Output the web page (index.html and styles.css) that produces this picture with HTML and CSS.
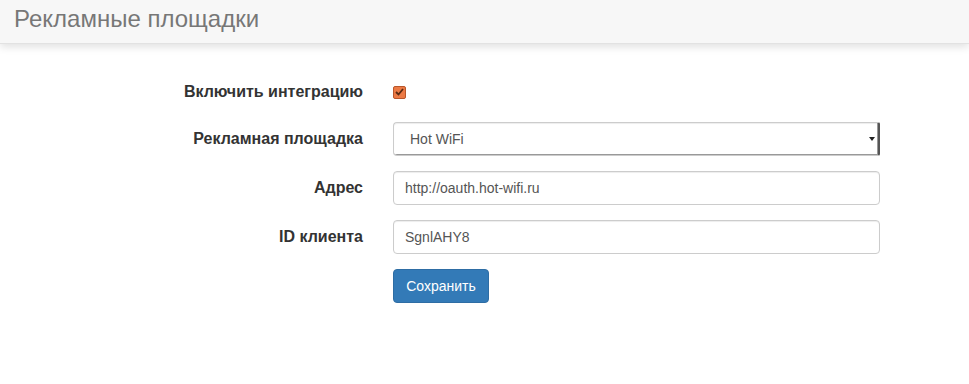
FILE: index.html
```html
<!DOCTYPE html>
<html lang="ru">
<head>
    <meta charset="UTF-8">
    <title>Рекламные площадки</title>
    <link rel="stylesheet" href="styles.css">
</head>
<body>

<div class="page-header">
    <h1>Рекламные площадки</h1>
</div>

<form class="form-horizontal">
    <div class="form-group">
        <label class="control-label">Включить интеграцию</label>
        <div class="field">
            <span class="check">
                <svg width="9" height="8" viewBox="0 0 9 8"><path d="M1 4 L3.5 6.5 L8 1" fill="none" stroke="#5a2a12" stroke-width="1.8"/></svg>
            </span>
        </div>
    </div>
    <div class="form-group">
        <label class="control-label">Рекламная площадка</label>
        <div class="field">
            <div class="select">
                <span>Hot WiFi</span>
                <span class="select-arrow"></span>
            </div>
        </div>
    </div>
    <div class="form-group">
        <label class="control-label">Адрес</label>
        <div class="field">
            <input type="text" class="form-control" value="http://oauth.hot-wifi.ru">
        </div>
    </div>
    <div class="form-group">
        <label class="control-label">ID клиента</label>
        <div class="field">
            <input type="text" class="form-control" value="SgnlAHY8">
        </div>
    </div>
    <div class="form-group">
        <div></div>
        <div class="field">
            <button type="button" class="btn">Сохранить</button>
        </div>
    </div>
</form>

</body>
</html>
```

FILE: styles.css
```css
body {
    font-family: "Liberation Sans", Arial, Helvetica, sans-serif;
    font-size: 14px;
    color: #333;
    background-color: #fff;
    margin: 0;
    padding: 0;
}
.page-header {
    background-color: #f7f7f7;
    height: 44px;
    box-shadow: 0 3px 8px rgba(0, 0, 0, 0.12);
    border-bottom: 1px solid #e2e2e2;
    box-sizing: border-box;
    padding-left: 14px;
}
.page-header h1 {
    margin: 0;
    font-size: 24px;
    font-weight: normal;
    line-height: 38px;
    color: #777;
}
.form-horizontal {
    margin-top: 31px;
}
.form-group {
    display: grid;
    grid-template-columns: 363px 487px;
    column-gap: 30px;
    align-items: center;
    margin-bottom: 15px;
}
.form-group:first-child {
    margin-bottom: 13px;
}
.control-label {
    text-align: right;
    font-weight: bold;
    font-size: 16px;
    line-height: 34px;
}
.field {
    height: 34px;
    display: flex;
    align-items: center;
}
.check {
    width: 13px;
    height: 13px;
    box-sizing: border-box;
    background-color: #ec7a45;
    border: 1px solid #b9562a;
    border-radius: 2px;
    display: flex;
    align-items: center;
    justify-content: center;
}
.form-control, .select {
    width: 100%;
    height: 34px;
    padding: 6px 11px;
    font-family: inherit;
    font-size: 14px;
    color: #555;
    background-color: #fff;
    border: 1px solid #ccc;
    border-radius: 4px;
    box-sizing: border-box;
    box-shadow: inset 0 1px 1px rgba(0, 0, 0, 0.075);
}
.select {
    display: flex;
    align-items: center;
    justify-content: space-between;
    padding-left: 16px;
    padding-right: 0;
    border-right: 2px solid #555;
    box-shadow: inset 0 1px 1px rgba(0, 0, 0, 0.075), inset -1px -1px 0 #999;
    border-radius: 4px 2px 2px 4px;
}
.select-arrow {
    width: 0;
    height: 0;
    border-left: 3px solid transparent;
    border-right: 3px solid transparent;
    border-top: 4px solid #222;
    margin-right: 3px;
}
.btn {
    width: 96px;
    height: 34px;
    background-color: #337ab7;
    border: 1px solid #2e6da4;
    border-radius: 4px;
    color: #fff;
    font-family: inherit;
    font-size: 14px;
    cursor: pointer;
    padding: 0;
}
.btn:hover {
    background-color: #286090;
}
```
